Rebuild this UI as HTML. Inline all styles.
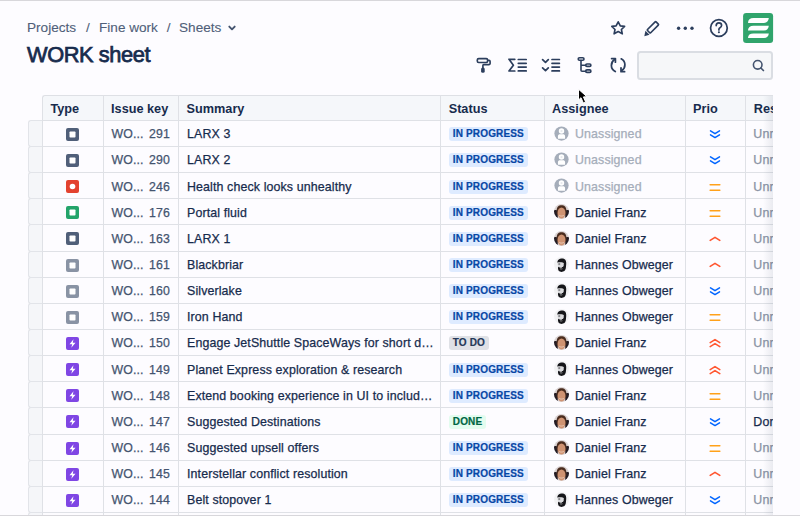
<!DOCTYPE html>
<html><head><meta charset="utf-8">
<style>
*{box-sizing:border-box;margin:0;padding:0}
html,body{width:800px;height:516px;overflow:hidden;background:#FDFCFF;font-family:"Liberation Sans",sans-serif;color:#172B4D}
.topline{position:absolute;left:0;top:0;width:800px;height:1px;background:#D8D7DB}
.botline{position:absolute;left:0;top:515px;width:800px;height:1px;background:#D8D7DB}
.crumb{position:absolute;top:19px;left:27px;font-size:13.6px;line-height:18px;color:#505F79;white-space:nowrap;-webkit-text-stroke:0.1px #505F79}
.crumb span{position:absolute;top:0}
.title{position:absolute;top:42px;left:27px;font-size:21.8px;line-height:26px;letter-spacing:-0.4px;color:#172B4D;white-space:nowrap;-webkit-text-stroke:0.75px #172B4D}
.ico{position:absolute}
.search{position:absolute;left:637px;top:50.6px;width:135.5px;height:29.1px;border:2px solid #DADDE3;border-radius:3.5px;background:#F6F7F9}
.table{position:absolute;left:0;top:0;width:773px;height:516px;overflow:hidden}
.hdr{position:absolute;left:41.9px;top:95px;width:800px;height:24.9px;border-left:1px solid #DEE0E5;background:#F5F7FA;border-top:1px solid #DEE0E5;border-top-left-radius:3px}
.hdr div{position:absolute;top:1px;height:24px;line-height:24px;font-weight:bold;font-size:12.7px;color:#172B4D;padding-left:7.6px;white-space:nowrap}
.row{position:absolute;left:0;width:800px;height:26.14px}
.row .gut{position:absolute;left:27.5px;top:0;width:16px;height:27.14px;background:#F5F6F9;border:1px solid #E2E4E9;border-right:none;border-radius:3px 0 0 3px}
.row .c{position:absolute;top:0;height:26.14px;display:flex;align-items:center;padding-left:8.5px;padding-top:1.8px;white-space:nowrap;font-size:12.4px;letter-spacing:0.12px;background:#FDFCFF;border-top:1px solid #DFE1E6;-webkit-text-stroke:0.25px currentColor}
.ctype{justify-content:center;padding-left:0 !important}
.ckey{color:#44546F;font-size:12.3px !important}
.ckey .wo{position:absolute;left:8.6px;top:6.4px}
.ckey .num{position:absolute;right:8.5px;top:6.4px}
.loz{-webkit-text-stroke:0.2px currentColor;display:inline-block;height:14px;line-height:14px;border-radius:3px;font-weight:bold;font-size:10px;letter-spacing:0.15px;padding:0 4px 0 4.2px;margin-left:-0.5px}
.loz.prog{background:#DEEBFF;color:#0747A6}
.loz.todo{background:#DFE1E6;color:#253858}
.loz.done{background:#E3FCEF;color:#006644}
.casg .av{position:absolute;left:9.5px;top:5.1px;width:15px;height:15px}
.casg .nm{position:absolute;left:31px;top:6.4px}
.casg.un .nm{color:#A5ADBA}
.cpr{justify-content:center;padding-left:0 !important}
.cres{color:#8993A4;padding-left:7.6px !important}
.cres.dark{color:#172B4D}
.vl{position:absolute;top:95px;width:1px;height:420px;background:#DFE1E6}
.shadow{position:absolute;left:763px;top:96px;width:10px;height:420px;background:linear-gradient(to right,rgba(9,30,66,0),rgba(9,30,66,0.08))}
</style></head><body>
<div class="topline"></div>

<div class="crumb"><span style="left:0">Projects</span><span style="left:59px">/</span><span style="left:72px">Fine work</span><span style="left:139.7px">/</span><span style="left:152px">Sheets</span>
<svg style="position:absolute;left:200px;top:5.1px" width="10" height="8" viewBox="0 0 10 8"><path d="M2.3 2.6 L5 5.3 L7.7 2.6" stroke="#44546F" stroke-width="1.9" fill="none" stroke-linecap="round" stroke-linejoin="round"/></svg></div>
<div class="title">WORK sheet</div>

<!-- top right icons -->
<svg class="ico" style="left:0;top:0" width="800" height="100" viewBox="0 0 800 100">
<g fill="none" stroke="#2C3E5D" stroke-width="1.65" stroke-linejoin="round" stroke-linecap="round">
<path d="M618.2 21.8 L620.3 25.9 L624.6 26.4 L621.4 29.5 L622.3 33.8 L618.2 31.6 L614.1 33.8 L615 29.5 L611.8 26.4 L616.1 25.9 Z"/>
<g transform="translate(652.9 27.3) rotate(-45)"><rect x="-6.1" y="-2.25" width="12.2" height="4.5" rx="0.7"/></g>
<circle cx="718.9" cy="28" r="8.35" stroke-width="1.75"/>
<path d="M716.2 25.6 Q716.2 22.8 718.9 22.8 Q721.6 22.8 721.6 25.3 Q721.6 26.9 720 27.7 Q718.9 28.3 718.9 29.6 V29.9" stroke-width="1.7"/>
</g>
<g fill="#2C3E5D">
<path transform="translate(652.9 27.3) rotate(-45)" d="M-7.7 -2.9 L-7.7 2.9 L-12.4 0.3 Z"/>
<circle cx="678.6" cy="28.2" r="1.7"/><circle cx="685.3" cy="28.2" r="1.7"/><circle cx="692" cy="28.2" r="1.7"/>
<circle cx="718.9" cy="32.3" r="1.05"/>
</g>
<rect x="743.1" y="13.1" width="30" height="29.8" rx="3.2" fill="#30A46C"/>
<g fill="#fff">
<path d="M748 22.9 C748 19.6 750 18 753.5 18 H768.8 C768.4 21 767 22.9 764 22.9 Z"/>
<path d="M748 30.6 C748 27.3 750 25.7 753.5 25.7 H768.8 C768.4 28.7 767 30.6 764 30.6 Z"/>
<path d="M748 37.9 C748 34.8 750 33.4 753.5 33.4 H768.8 C768.4 36.2 767 37.9 764 37.9 Z"/>
</g>
<!-- toolbar -->
<g fill="none" stroke="#2C3E5D" stroke-width="1.65" stroke-linejoin="round" stroke-linecap="round">
<rect x="477.3" y="58.6" width="10.3" height="3.9" rx="1.4"/>
<path d="M487.8 60.4 H489 Q490.1 60.4 490.1 61.5 V63.6 Q490.1 64.6 489.1 64.6 H483.7 Q482.9 64.6 482.9 65.4 V68"/>
<path d="M509 59.3 H514.8 M509 59.3 L513.4 65.2 L509 71 H514.8" stroke-width="1.7"/>
<path d="M518.3 59.5 H526.2 M518.3 63.3 H526.2 M518.3 67.1 H526.2 M518.3 70.9 H526.2" stroke-width="1.7"/>
<path d="M542.6 59.7 L545.5 62.4 L548.3 59.7 M542.6 67.9 L545.5 70.6 L548.3 67.9" stroke-width="1.75"/>
<path d="M552 59.5 H559.4 M552 63.3 H559.4 M552 67.1 H559.4 M552 70.9 H559.4" stroke-width="1.7"/>
<rect x="578.2" y="57.8" width="5.8" height="2.5" rx="1.25" stroke-width="1.6"/>
<rect x="585.7" y="64" width="5.2" height="2.4" rx="1.2" stroke-width="1.6"/>
<rect x="585.7" y="69.9" width="5.2" height="2.5" rx="1.25" stroke-width="1.6"/>
<path d="M581 60.5 V70.2 Q581 71.2 582 71.2 H585.6 M581 65.3 H585.6" stroke-width="1.6"/>
<path d="M614.6 59.6 Q611.4 61.6 611.4 65.4 Q611.4 69.4 615.3 71.6" stroke-width="1.75"/>
<path d="M611.6 58.6 H615.4 V62.2" stroke-width="1.75"/>
<path d="M621.2 58.8 Q624.9 60.8 624.9 64.8 Q624.9 68.6 621.8 70.6" stroke-width="1.75"/>
<path d="M621 67.8 V71.7 H624.6" stroke-width="1.75"/>
</g>
<rect x="481.1" y="67.6" width="3.6" height="5.2" rx="1.5" fill="#2C3E5D"/>
</svg>

<div class="search"><svg style="position:absolute;left:-637px;top:-50.6px;margin:-2px 0 0 -2px" width="800" height="100" viewBox="0 0 800 100"><circle cx="757.7" cy="64.8" r="4.3" fill="none" stroke="#44546F" stroke-width="1.6"/><path d="M760.9 68 L763.4 70.5" stroke="#44546F" stroke-width="1.7" stroke-linecap="round"/></svg></div>

<div class="table">
<div class="hdr">
<div style="left:0">Type</div>
<div style="left:60.6px">Issue key</div>
<div style="left:136.1px">Summary</div>
<div style="left:398.2px">Status</div>
<div style="left:501.6px">Assignee</div>
<div style="left:642.6px">Prio</div>
<div style="left:703.35px">Res</div>
</div>
<div class="row" style="top:119.90px">
<div class="gut"></div>
<div class="c ctype" style="left:42.4px;width:60.6px"><svg width="13" height="13" viewBox="0 0 13 13"><rect width="13" height="13" rx="2" fill="#505F79"/><rect x="3.5" y="3.5" width="6" height="6" rx="0.8" fill="#fff"/></svg></div>
<div class="c ckey" style="left:103px;width:75.5px"><span class="wo">WO...</span><span class="num">291</span></div>
<div class="c csum" style="left:178.5px;width:262.1px">LARX 3</div>
<div class="c cst" style="left:440.6px;width:103.39999999999998px"><span class="loz prog">IN PROGRESS</span></div>
<div class="c casg un" style="left:544px;width:141px"><span class="av"><svg width="15" height="15" viewBox="0 0 16 16"><circle cx="8" cy="8" r="7.6" fill="#A5ADBA"/><circle cx="8" cy="5.4" r="2.9" fill="#fff"/><circle cx="8" cy="5.4" r="1.2" fill="#E8EAEE"/><path d="M4.2 13.6 V11 C4.2 9.6 5.2 8.9 6.4 8.9 H9.6 C10.8 8.9 11.8 9.6 11.8 11 V13.6 Z" fill="#fff"/></svg></span><span class="nm">Unassigned</span></div>
<div class="c cpr" style="left:685px;width:60.75px"><svg width="12" height="10" viewBox="0 0 12 10"><path d="M1.5 1.9 L6 4.7 L10.5 1.9 M1.5 5.8 L6 8.6 L10.5 5.8" stroke="#0065FF" stroke-width="1.5" fill="none" stroke-linecap="round" stroke-linejoin="round"/></svg></div>
<div class="c cres " style="left:745.75px;width:94.25px">Unr</div>
</div>
<div class="row" style="top:146.04px">
<div class="gut"></div>
<div class="c ctype" style="left:42.4px;width:60.6px"><svg width="13" height="13" viewBox="0 0 13 13"><rect width="13" height="13" rx="2" fill="#505F79"/><rect x="3.5" y="3.5" width="6" height="6" rx="0.8" fill="#fff"/></svg></div>
<div class="c ckey" style="left:103px;width:75.5px"><span class="wo">WO...</span><span class="num">290</span></div>
<div class="c csum" style="left:178.5px;width:262.1px">LARX 2</div>
<div class="c cst" style="left:440.6px;width:103.39999999999998px"><span class="loz prog">IN PROGRESS</span></div>
<div class="c casg un" style="left:544px;width:141px"><span class="av"><svg width="15" height="15" viewBox="0 0 16 16"><circle cx="8" cy="8" r="7.6" fill="#A5ADBA"/><circle cx="8" cy="5.4" r="2.9" fill="#fff"/><circle cx="8" cy="5.4" r="1.2" fill="#E8EAEE"/><path d="M4.2 13.6 V11 C4.2 9.6 5.2 8.9 6.4 8.9 H9.6 C10.8 8.9 11.8 9.6 11.8 11 V13.6 Z" fill="#fff"/></svg></span><span class="nm">Unassigned</span></div>
<div class="c cpr" style="left:685px;width:60.75px"><svg width="12" height="10" viewBox="0 0 12 10"><path d="M1.5 1.9 L6 4.7 L10.5 1.9 M1.5 5.8 L6 8.6 L10.5 5.8" stroke="#0065FF" stroke-width="1.5" fill="none" stroke-linecap="round" stroke-linejoin="round"/></svg></div>
<div class="c cres " style="left:745.75px;width:94.25px">Unr</div>
</div>
<div class="row" style="top:172.18px">
<div class="gut"></div>
<div class="c ctype" style="left:42.4px;width:60.6px"><svg width="13" height="13" viewBox="0 0 13 13"><rect width="13" height="13" rx="2" fill="#E3422F"/><circle cx="6.5" cy="6.5" r="2.8" fill="#fff"/></svg></div>
<div class="c ckey" style="left:103px;width:75.5px"><span class="wo">WO...</span><span class="num">246</span></div>
<div class="c csum" style="left:178.5px;width:262.1px">Health check looks unhealthy</div>
<div class="c cst" style="left:440.6px;width:103.39999999999998px"><span class="loz prog">IN PROGRESS</span></div>
<div class="c casg un" style="left:544px;width:141px"><span class="av"><svg width="15" height="15" viewBox="0 0 16 16"><circle cx="8" cy="8" r="7.6" fill="#A5ADBA"/><circle cx="8" cy="5.4" r="2.9" fill="#fff"/><circle cx="8" cy="5.4" r="1.2" fill="#E8EAEE"/><path d="M4.2 13.6 V11 C4.2 9.6 5.2 8.9 6.4 8.9 H9.6 C10.8 8.9 11.8 9.6 11.8 11 V13.6 Z" fill="#fff"/></svg></span><span class="nm">Unassigned</span></div>
<div class="c cpr" style="left:685px;width:60.75px"><svg width="12" height="10" viewBox="0 0 12 10"><path d="M1.2 2.7 H10.8 M1.2 8.2 H10.8" stroke="#FFA11A" stroke-width="1.6" fill="none" stroke-linecap="round"/></svg></div>
<div class="c cres " style="left:745.75px;width:94.25px">Unr</div>
</div>
<div class="row" style="top:198.32px">
<div class="gut"></div>
<div class="c ctype" style="left:42.4px;width:60.6px"><svg width="13" height="13" viewBox="0 0 13 13"><rect width="13" height="13" rx="2" fill="#23A46A"/><rect x="3.5" y="3.5" width="6" height="6" rx="0.8" fill="#fff"/></svg></div>
<div class="c ckey" style="left:103px;width:75.5px"><span class="wo">WO...</span><span class="num">176</span></div>
<div class="c csum" style="left:178.5px;width:262.1px">Portal fluid</div>
<div class="c cst" style="left:440.6px;width:103.39999999999998px"><span class="loz prog">IN PROGRESS</span></div>
<div class="c casg " style="left:544px;width:141px"><span class="av"><svg width="15" height="15" viewBox="0 0 16 16"><defs><clipPath id="c"><circle cx="8" cy="8" r="8"/></clipPath></defs><g clip-path="url(#c)"><rect width="16" height="16" fill="#D9D2D2"/><path d="M0 7 C1.5 6 3 6.5 4 8 L4 16 H0Z M16 7 C14.5 6 13 6.5 12 8 L12 16 H16Z" fill="#231C24"/><path d="M2.8 10 C2.2 2.2 5 1.2 8 1.2 C11 1.2 13.8 2.2 13.2 10 L12 12 L4 12 Z" fill="#4A2C1E"/><ellipse cx="8" cy="9.6" rx="4.2" ry="5.9" fill="#CF9372"/><path d="M5.6 12.2 C6.8 13.1 9.2 13.1 10.4 12.2" stroke="#EDD3C2" stroke-width="0.9" fill="none"/></g></svg></span><span class="nm">Daniel Franz</span></div>
<div class="c cpr" style="left:685px;width:60.75px"><svg width="12" height="10" viewBox="0 0 12 10"><path d="M1.2 2.7 H10.8 M1.2 8.2 H10.8" stroke="#FFA11A" stroke-width="1.6" fill="none" stroke-linecap="round"/></svg></div>
<div class="c cres " style="left:745.75px;width:94.25px">Unr</div>
</div>
<div class="row" style="top:224.46px">
<div class="gut"></div>
<div class="c ctype" style="left:42.4px;width:60.6px"><svg width="13" height="13" viewBox="0 0 13 13"><rect width="13" height="13" rx="2" fill="#505F79"/><rect x="3.5" y="3.5" width="6" height="6" rx="0.8" fill="#fff"/></svg></div>
<div class="c ckey" style="left:103px;width:75.5px"><span class="wo">WO...</span><span class="num">163</span></div>
<div class="c csum" style="left:178.5px;width:262.1px">LARX 1</div>
<div class="c cst" style="left:440.6px;width:103.39999999999998px"><span class="loz prog">IN PROGRESS</span></div>
<div class="c casg " style="left:544px;width:141px"><span class="av"><svg width="15" height="15" viewBox="0 0 16 16"><defs><clipPath id="c"><circle cx="8" cy="8" r="8"/></clipPath></defs><g clip-path="url(#c)"><rect width="16" height="16" fill="#D9D2D2"/><path d="M0 7 C1.5 6 3 6.5 4 8 L4 16 H0Z M16 7 C14.5 6 13 6.5 12 8 L12 16 H16Z" fill="#231C24"/><path d="M2.8 10 C2.2 2.2 5 1.2 8 1.2 C11 1.2 13.8 2.2 13.2 10 L12 12 L4 12 Z" fill="#4A2C1E"/><ellipse cx="8" cy="9.6" rx="4.2" ry="5.9" fill="#CF9372"/><path d="M5.6 12.2 C6.8 13.1 9.2 13.1 10.4 12.2" stroke="#EDD3C2" stroke-width="0.9" fill="none"/></g></svg></span><span class="nm">Daniel Franz</span></div>
<div class="c cpr" style="left:685px;width:60.75px"><svg width="12" height="10" viewBox="0 0 12 10"><path d="M1.2 6.4 L6 3.4 L10.8 6.4" stroke="#FF5630" stroke-width="1.6" fill="none" stroke-linecap="round" stroke-linejoin="round"/></svg></div>
<div class="c cres " style="left:745.75px;width:94.25px">Unr</div>
</div>
<div class="row" style="top:250.60px">
<div class="gut"></div>
<div class="c ctype" style="left:42.4px;width:60.6px"><svg width="13" height="13" viewBox="0 0 13 13"><rect width="13" height="13" rx="2" fill="#8993A4"/><rect x="3.5" y="3.5" width="6" height="6" rx="0.8" fill="#fff"/></svg></div>
<div class="c ckey" style="left:103px;width:75.5px"><span class="wo">WO...</span><span class="num">161</span></div>
<div class="c csum" style="left:178.5px;width:262.1px">Blackbriar</div>
<div class="c cst" style="left:440.6px;width:103.39999999999998px"><span class="loz prog">IN PROGRESS</span></div>
<div class="c casg " style="left:544px;width:141px"><span class="av"><svg width="15" height="15" viewBox="0 0 16 16"><defs><clipPath id="c2"><circle cx="8" cy="8" r="8"/></clipPath></defs><g clip-path="url(#c2)"><rect width="16" height="16" fill="#F2F2F4"/><path d="M3.6 6 C3.6 2 7 1.2 9.5 1.6 C12.5 2 13.4 5 13 8 L12.6 12 C12 15 10 16 8 16 C6 16 4.4 15 4.2 12 L4.6 10 C6 11.5 9 11.5 10 9.5 L10.2 6.5 C9 5.8 6 5.6 3.6 6 Z" fill="#16161A"/><path d="M3.6 6.2 C6 5.6 9 5.8 10.2 6.5 L10 9.5 C9 11.5 6 11.5 4.6 10 C3.9 9 3.6 7.5 3.6 6.2Z" fill="#DADADD"/><path d="M4.6 7.5 H6.6" stroke="#2A2A2E" stroke-width="0.9"/><path d="M6.4 12.6 C7.2 12.9 8.2 12.9 9 12.5" stroke="#BBB" stroke-width="0.8" fill="none"/></g></svg></span><span class="nm">Hannes Obweger</span></div>
<div class="c cpr" style="left:685px;width:60.75px"><svg width="12" height="10" viewBox="0 0 12 10"><path d="M1.2 6.4 L6 3.4 L10.8 6.4" stroke="#FF5630" stroke-width="1.6" fill="none" stroke-linecap="round" stroke-linejoin="round"/></svg></div>
<div class="c cres " style="left:745.75px;width:94.25px">Unr</div>
</div>
<div class="row" style="top:276.74px">
<div class="gut"></div>
<div class="c ctype" style="left:42.4px;width:60.6px"><svg width="13" height="13" viewBox="0 0 13 13"><rect width="13" height="13" rx="2" fill="#8993A4"/><rect x="3.5" y="3.5" width="6" height="6" rx="0.8" fill="#fff"/></svg></div>
<div class="c ckey" style="left:103px;width:75.5px"><span class="wo">WO...</span><span class="num">160</span></div>
<div class="c csum" style="left:178.5px;width:262.1px">Silverlake</div>
<div class="c cst" style="left:440.6px;width:103.39999999999998px"><span class="loz prog">IN PROGRESS</span></div>
<div class="c casg " style="left:544px;width:141px"><span class="av"><svg width="15" height="15" viewBox="0 0 16 16"><defs><clipPath id="c2"><circle cx="8" cy="8" r="8"/></clipPath></defs><g clip-path="url(#c2)"><rect width="16" height="16" fill="#F2F2F4"/><path d="M3.6 6 C3.6 2 7 1.2 9.5 1.6 C12.5 2 13.4 5 13 8 L12.6 12 C12 15 10 16 8 16 C6 16 4.4 15 4.2 12 L4.6 10 C6 11.5 9 11.5 10 9.5 L10.2 6.5 C9 5.8 6 5.6 3.6 6 Z" fill="#16161A"/><path d="M3.6 6.2 C6 5.6 9 5.8 10.2 6.5 L10 9.5 C9 11.5 6 11.5 4.6 10 C3.9 9 3.6 7.5 3.6 6.2Z" fill="#DADADD"/><path d="M4.6 7.5 H6.6" stroke="#2A2A2E" stroke-width="0.9"/><path d="M6.4 12.6 C7.2 12.9 8.2 12.9 9 12.5" stroke="#BBB" stroke-width="0.8" fill="none"/></g></svg></span><span class="nm">Hannes Obweger</span></div>
<div class="c cpr" style="left:685px;width:60.75px"><svg width="12" height="10" viewBox="0 0 12 10"><path d="M1.5 1.9 L6 4.7 L10.5 1.9 M1.5 5.8 L6 8.6 L10.5 5.8" stroke="#0065FF" stroke-width="1.5" fill="none" stroke-linecap="round" stroke-linejoin="round"/></svg></div>
<div class="c cres " style="left:745.75px;width:94.25px">Unr</div>
</div>
<div class="row" style="top:302.88px">
<div class="gut"></div>
<div class="c ctype" style="left:42.4px;width:60.6px"><svg width="13" height="13" viewBox="0 0 13 13"><rect width="13" height="13" rx="2" fill="#8993A4"/><rect x="3.5" y="3.5" width="6" height="6" rx="0.8" fill="#fff"/></svg></div>
<div class="c ckey" style="left:103px;width:75.5px"><span class="wo">WO...</span><span class="num">159</span></div>
<div class="c csum" style="left:178.5px;width:262.1px">Iron Hand</div>
<div class="c cst" style="left:440.6px;width:103.39999999999998px"><span class="loz prog">IN PROGRESS</span></div>
<div class="c casg " style="left:544px;width:141px"><span class="av"><svg width="15" height="15" viewBox="0 0 16 16"><defs><clipPath id="c2"><circle cx="8" cy="8" r="8"/></clipPath></defs><g clip-path="url(#c2)"><rect width="16" height="16" fill="#F2F2F4"/><path d="M3.6 6 C3.6 2 7 1.2 9.5 1.6 C12.5 2 13.4 5 13 8 L12.6 12 C12 15 10 16 8 16 C6 16 4.4 15 4.2 12 L4.6 10 C6 11.5 9 11.5 10 9.5 L10.2 6.5 C9 5.8 6 5.6 3.6 6 Z" fill="#16161A"/><path d="M3.6 6.2 C6 5.6 9 5.8 10.2 6.5 L10 9.5 C9 11.5 6 11.5 4.6 10 C3.9 9 3.6 7.5 3.6 6.2Z" fill="#DADADD"/><path d="M4.6 7.5 H6.6" stroke="#2A2A2E" stroke-width="0.9"/><path d="M6.4 12.6 C7.2 12.9 8.2 12.9 9 12.5" stroke="#BBB" stroke-width="0.8" fill="none"/></g></svg></span><span class="nm">Hannes Obweger</span></div>
<div class="c cpr" style="left:685px;width:60.75px"><svg width="12" height="10" viewBox="0 0 12 10"><path d="M1.2 2.7 H10.8 M1.2 8.2 H10.8" stroke="#FFA11A" stroke-width="1.6" fill="none" stroke-linecap="round"/></svg></div>
<div class="c cres " style="left:745.75px;width:94.25px">Unr</div>
</div>
<div class="row" style="top:329.02px">
<div class="gut"></div>
<div class="c ctype" style="left:42.4px;width:60.6px"><svg width="13" height="13" viewBox="0 0 13 13"><rect width="13" height="13" rx="2" fill="#7F46E4"/><path d="M7.5 2.3 L3.5 7.3 H6.2 L5.3 10.8 L9.5 5.7 H6.8 Z" fill="#fff"/></svg></div>
<div class="c ckey" style="left:103px;width:75.5px"><span class="wo">WO...</span><span class="num">150</span></div>
<div class="c csum" style="left:178.5px;width:262.1px">Engage JetShuttle SpaceWays for short d…</div>
<div class="c cst" style="left:440.6px;width:103.39999999999998px"><span class="loz todo">TO DO</span></div>
<div class="c casg " style="left:544px;width:141px"><span class="av"><svg width="15" height="15" viewBox="0 0 16 16"><defs><clipPath id="c"><circle cx="8" cy="8" r="8"/></clipPath></defs><g clip-path="url(#c)"><rect width="16" height="16" fill="#D9D2D2"/><path d="M0 7 C1.5 6 3 6.5 4 8 L4 16 H0Z M16 7 C14.5 6 13 6.5 12 8 L12 16 H16Z" fill="#231C24"/><path d="M2.8 10 C2.2 2.2 5 1.2 8 1.2 C11 1.2 13.8 2.2 13.2 10 L12 12 L4 12 Z" fill="#4A2C1E"/><ellipse cx="8" cy="9.6" rx="4.2" ry="5.9" fill="#CF9372"/><path d="M5.6 12.2 C6.8 13.1 9.2 13.1 10.4 12.2" stroke="#EDD3C2" stroke-width="0.9" fill="none"/></g></svg></span><span class="nm">Daniel Franz</span></div>
<div class="c cpr" style="left:685px;width:60.75px"><svg width="12" height="10" viewBox="0 0 12 10"><path d="M1.2 4.6 L6 1.6 L10.8 4.6 M1.2 8.6 L6 5.6 L10.8 8.6" stroke="#FF5630" stroke-width="1.6" fill="none" stroke-linecap="round" stroke-linejoin="round"/></svg></div>
<div class="c cres " style="left:745.75px;width:94.25px">Unr</div>
</div>
<div class="row" style="top:355.16px">
<div class="gut"></div>
<div class="c ctype" style="left:42.4px;width:60.6px"><svg width="13" height="13" viewBox="0 0 13 13"><rect width="13" height="13" rx="2" fill="#7F46E4"/><path d="M7.5 2.3 L3.5 7.3 H6.2 L5.3 10.8 L9.5 5.7 H6.8 Z" fill="#fff"/></svg></div>
<div class="c ckey" style="left:103px;width:75.5px"><span class="wo">WO...</span><span class="num">149</span></div>
<div class="c csum" style="left:178.5px;width:262.1px">Planet Express exploration &amp; research</div>
<div class="c cst" style="left:440.6px;width:103.39999999999998px"><span class="loz prog">IN PROGRESS</span></div>
<div class="c casg " style="left:544px;width:141px"><span class="av"><svg width="15" height="15" viewBox="0 0 16 16"><defs><clipPath id="c2"><circle cx="8" cy="8" r="8"/></clipPath></defs><g clip-path="url(#c2)"><rect width="16" height="16" fill="#F2F2F4"/><path d="M3.6 6 C3.6 2 7 1.2 9.5 1.6 C12.5 2 13.4 5 13 8 L12.6 12 C12 15 10 16 8 16 C6 16 4.4 15 4.2 12 L4.6 10 C6 11.5 9 11.5 10 9.5 L10.2 6.5 C9 5.8 6 5.6 3.6 6 Z" fill="#16161A"/><path d="M3.6 6.2 C6 5.6 9 5.8 10.2 6.5 L10 9.5 C9 11.5 6 11.5 4.6 10 C3.9 9 3.6 7.5 3.6 6.2Z" fill="#DADADD"/><path d="M4.6 7.5 H6.6" stroke="#2A2A2E" stroke-width="0.9"/><path d="M6.4 12.6 C7.2 12.9 8.2 12.9 9 12.5" stroke="#BBB" stroke-width="0.8" fill="none"/></g></svg></span><span class="nm">Hannes Obweger</span></div>
<div class="c cpr" style="left:685px;width:60.75px"><svg width="12" height="10" viewBox="0 0 12 10"><path d="M1.2 4.6 L6 1.6 L10.8 4.6 M1.2 8.6 L6 5.6 L10.8 8.6" stroke="#FF5630" stroke-width="1.6" fill="none" stroke-linecap="round" stroke-linejoin="round"/></svg></div>
<div class="c cres " style="left:745.75px;width:94.25px">Unr</div>
</div>
<div class="row" style="top:381.30px">
<div class="gut"></div>
<div class="c ctype" style="left:42.4px;width:60.6px"><svg width="13" height="13" viewBox="0 0 13 13"><rect width="13" height="13" rx="2" fill="#7F46E4"/><path d="M7.5 2.3 L3.5 7.3 H6.2 L5.3 10.8 L9.5 5.7 H6.8 Z" fill="#fff"/></svg></div>
<div class="c ckey" style="left:103px;width:75.5px"><span class="wo">WO...</span><span class="num">148</span></div>
<div class="c csum" style="left:178.5px;width:262.1px">Extend booking experience in UI to includ…</div>
<div class="c cst" style="left:440.6px;width:103.39999999999998px"><span class="loz prog">IN PROGRESS</span></div>
<div class="c casg " style="left:544px;width:141px"><span class="av"><svg width="15" height="15" viewBox="0 0 16 16"><defs><clipPath id="c"><circle cx="8" cy="8" r="8"/></clipPath></defs><g clip-path="url(#c)"><rect width="16" height="16" fill="#D9D2D2"/><path d="M0 7 C1.5 6 3 6.5 4 8 L4 16 H0Z M16 7 C14.5 6 13 6.5 12 8 L12 16 H16Z" fill="#231C24"/><path d="M2.8 10 C2.2 2.2 5 1.2 8 1.2 C11 1.2 13.8 2.2 13.2 10 L12 12 L4 12 Z" fill="#4A2C1E"/><ellipse cx="8" cy="9.6" rx="4.2" ry="5.9" fill="#CF9372"/><path d="M5.6 12.2 C6.8 13.1 9.2 13.1 10.4 12.2" stroke="#EDD3C2" stroke-width="0.9" fill="none"/></g></svg></span><span class="nm">Daniel Franz</span></div>
<div class="c cpr" style="left:685px;width:60.75px"><svg width="12" height="10" viewBox="0 0 12 10"><path d="M1.2 2.7 H10.8 M1.2 8.2 H10.8" stroke="#FFA11A" stroke-width="1.6" fill="none" stroke-linecap="round"/></svg></div>
<div class="c cres " style="left:745.75px;width:94.25px">Unr</div>
</div>
<div class="row" style="top:407.44px">
<div class="gut"></div>
<div class="c ctype" style="left:42.4px;width:60.6px"><svg width="13" height="13" viewBox="0 0 13 13"><rect width="13" height="13" rx="2" fill="#7F46E4"/><path d="M7.5 2.3 L3.5 7.3 H6.2 L5.3 10.8 L9.5 5.7 H6.8 Z" fill="#fff"/></svg></div>
<div class="c ckey" style="left:103px;width:75.5px"><span class="wo">WO...</span><span class="num">147</span></div>
<div class="c csum" style="left:178.5px;width:262.1px">Suggested Destinations</div>
<div class="c cst" style="left:440.6px;width:103.39999999999998px"><span class="loz done">DONE</span></div>
<div class="c casg " style="left:544px;width:141px"><span class="av"><svg width="15" height="15" viewBox="0 0 16 16"><defs><clipPath id="c"><circle cx="8" cy="8" r="8"/></clipPath></defs><g clip-path="url(#c)"><rect width="16" height="16" fill="#D9D2D2"/><path d="M0 7 C1.5 6 3 6.5 4 8 L4 16 H0Z M16 7 C14.5 6 13 6.5 12 8 L12 16 H16Z" fill="#231C24"/><path d="M2.8 10 C2.2 2.2 5 1.2 8 1.2 C11 1.2 13.8 2.2 13.2 10 L12 12 L4 12 Z" fill="#4A2C1E"/><ellipse cx="8" cy="9.6" rx="4.2" ry="5.9" fill="#CF9372"/><path d="M5.6 12.2 C6.8 13.1 9.2 13.1 10.4 12.2" stroke="#EDD3C2" stroke-width="0.9" fill="none"/></g></svg></span><span class="nm">Daniel Franz</span></div>
<div class="c cpr" style="left:685px;width:60.75px"><svg width="12" height="10" viewBox="0 0 12 10"><path d="M1.5 1.9 L6 4.7 L10.5 1.9 M1.5 5.8 L6 8.6 L10.5 5.8" stroke="#0065FF" stroke-width="1.5" fill="none" stroke-linecap="round" stroke-linejoin="round"/></svg></div>
<div class="c cres dark" style="left:745.75px;width:94.25px">Don</div>
</div>
<div class="row" style="top:433.58px">
<div class="gut"></div>
<div class="c ctype" style="left:42.4px;width:60.6px"><svg width="13" height="13" viewBox="0 0 13 13"><rect width="13" height="13" rx="2" fill="#7F46E4"/><path d="M7.5 2.3 L3.5 7.3 H6.2 L5.3 10.8 L9.5 5.7 H6.8 Z" fill="#fff"/></svg></div>
<div class="c ckey" style="left:103px;width:75.5px"><span class="wo">WO...</span><span class="num">146</span></div>
<div class="c csum" style="left:178.5px;width:262.1px">Suggested upsell offers</div>
<div class="c cst" style="left:440.6px;width:103.39999999999998px"><span class="loz prog">IN PROGRESS</span></div>
<div class="c casg " style="left:544px;width:141px"><span class="av"><svg width="15" height="15" viewBox="0 0 16 16"><defs><clipPath id="c"><circle cx="8" cy="8" r="8"/></clipPath></defs><g clip-path="url(#c)"><rect width="16" height="16" fill="#D9D2D2"/><path d="M0 7 C1.5 6 3 6.5 4 8 L4 16 H0Z M16 7 C14.5 6 13 6.5 12 8 L12 16 H16Z" fill="#231C24"/><path d="M2.8 10 C2.2 2.2 5 1.2 8 1.2 C11 1.2 13.8 2.2 13.2 10 L12 12 L4 12 Z" fill="#4A2C1E"/><ellipse cx="8" cy="9.6" rx="4.2" ry="5.9" fill="#CF9372"/><path d="M5.6 12.2 C6.8 13.1 9.2 13.1 10.4 12.2" stroke="#EDD3C2" stroke-width="0.9" fill="none"/></g></svg></span><span class="nm">Daniel Franz</span></div>
<div class="c cpr" style="left:685px;width:60.75px"><svg width="12" height="10" viewBox="0 0 12 10"><path d="M1.2 2.7 H10.8 M1.2 8.2 H10.8" stroke="#FFA11A" stroke-width="1.6" fill="none" stroke-linecap="round"/></svg></div>
<div class="c cres " style="left:745.75px;width:94.25px">Unr</div>
</div>
<div class="row" style="top:459.72px">
<div class="gut"></div>
<div class="c ctype" style="left:42.4px;width:60.6px"><svg width="13" height="13" viewBox="0 0 13 13"><rect width="13" height="13" rx="2" fill="#7F46E4"/><path d="M7.5 2.3 L3.5 7.3 H6.2 L5.3 10.8 L9.5 5.7 H6.8 Z" fill="#fff"/></svg></div>
<div class="c ckey" style="left:103px;width:75.5px"><span class="wo">WO...</span><span class="num">145</span></div>
<div class="c csum" style="left:178.5px;width:262.1px">Interstellar conflict resolution</div>
<div class="c cst" style="left:440.6px;width:103.39999999999998px"><span class="loz prog">IN PROGRESS</span></div>
<div class="c casg " style="left:544px;width:141px"><span class="av"><svg width="15" height="15" viewBox="0 0 16 16"><defs><clipPath id="c"><circle cx="8" cy="8" r="8"/></clipPath></defs><g clip-path="url(#c)"><rect width="16" height="16" fill="#D9D2D2"/><path d="M0 7 C1.5 6 3 6.5 4 8 L4 16 H0Z M16 7 C14.5 6 13 6.5 12 8 L12 16 H16Z" fill="#231C24"/><path d="M2.8 10 C2.2 2.2 5 1.2 8 1.2 C11 1.2 13.8 2.2 13.2 10 L12 12 L4 12 Z" fill="#4A2C1E"/><ellipse cx="8" cy="9.6" rx="4.2" ry="5.9" fill="#CF9372"/><path d="M5.6 12.2 C6.8 13.1 9.2 13.1 10.4 12.2" stroke="#EDD3C2" stroke-width="0.9" fill="none"/></g></svg></span><span class="nm">Daniel Franz</span></div>
<div class="c cpr" style="left:685px;width:60.75px"><svg width="12" height="10" viewBox="0 0 12 10"><path d="M1.2 6.4 L6 3.4 L10.8 6.4" stroke="#FF5630" stroke-width="1.6" fill="none" stroke-linecap="round" stroke-linejoin="round"/></svg></div>
<div class="c cres " style="left:745.75px;width:94.25px">Unr</div>
</div>
<div class="row" style="top:485.86px">
<div class="gut"></div>
<div class="c ctype" style="left:42.4px;width:60.6px"><svg width="13" height="13" viewBox="0 0 13 13"><rect width="13" height="13" rx="2" fill="#7F46E4"/><path d="M7.5 2.3 L3.5 7.3 H6.2 L5.3 10.8 L9.5 5.7 H6.8 Z" fill="#fff"/></svg></div>
<div class="c ckey" style="left:103px;width:75.5px"><span class="wo">WO...</span><span class="num">144</span></div>
<div class="c csum" style="left:178.5px;width:262.1px">Belt stopover 1</div>
<div class="c cst" style="left:440.6px;width:103.39999999999998px"><span class="loz prog">IN PROGRESS</span></div>
<div class="c casg " style="left:544px;width:141px"><span class="av"><svg width="15" height="15" viewBox="0 0 16 16"><defs><clipPath id="c2"><circle cx="8" cy="8" r="8"/></clipPath></defs><g clip-path="url(#c2)"><rect width="16" height="16" fill="#F2F2F4"/><path d="M3.6 6 C3.6 2 7 1.2 9.5 1.6 C12.5 2 13.4 5 13 8 L12.6 12 C12 15 10 16 8 16 C6 16 4.4 15 4.2 12 L4.6 10 C6 11.5 9 11.5 10 9.5 L10.2 6.5 C9 5.8 6 5.6 3.6 6 Z" fill="#16161A"/><path d="M3.6 6.2 C6 5.6 9 5.8 10.2 6.5 L10 9.5 C9 11.5 6 11.5 4.6 10 C3.9 9 3.6 7.5 3.6 6.2Z" fill="#DADADD"/><path d="M4.6 7.5 H6.6" stroke="#2A2A2E" stroke-width="0.9"/><path d="M6.4 12.6 C7.2 12.9 8.2 12.9 9 12.5" stroke="#BBB" stroke-width="0.8" fill="none"/></g></svg></span><span class="nm">Hannes Obweger</span></div>
<div class="c cpr" style="left:685px;width:60.75px"><svg width="12" height="10" viewBox="0 0 12 10"><path d="M1.5 1.9 L6 4.7 L10.5 1.9 M1.5 5.8 L6 8.6 L10.5 5.8" stroke="#0065FF" stroke-width="1.5" fill="none" stroke-linecap="round" stroke-linejoin="round"/></svg></div>
<div class="c cres " style="left:745.75px;width:94.25px">Unr</div>
</div>
<div class="row" style="top:512.00px"><div class="gut"></div><div class="c" style="left:42.4px;width:797.6px"></div></div>
<div class="vl" style="left:41.90px;top:99px"></div><div class="vl" style="left:102.50px;"></div><div class="vl" style="left:178.00px;"></div><div class="vl" style="left:440.10px;"></div><div class="vl" style="left:543.50px;"></div><div class="vl" style="left:684.50px;"></div><div class="vl" style="left:745.25px;"></div>
<div class="shadow"></div>
</div>

<svg class="ico" style="left:570px;top:80px" width="30" height="30" viewBox="570 80 30 30"><path d="M578.5 89.2 L578.5 100 L581 97.7 L583.3 102.9 L585.6 101.9 L583.4 96.9 L586.9 96.7 Z" fill="#000" stroke="#fff" stroke-width="1" stroke-linejoin="round"/></svg>
<div class="botline"></div>
</body></html>
